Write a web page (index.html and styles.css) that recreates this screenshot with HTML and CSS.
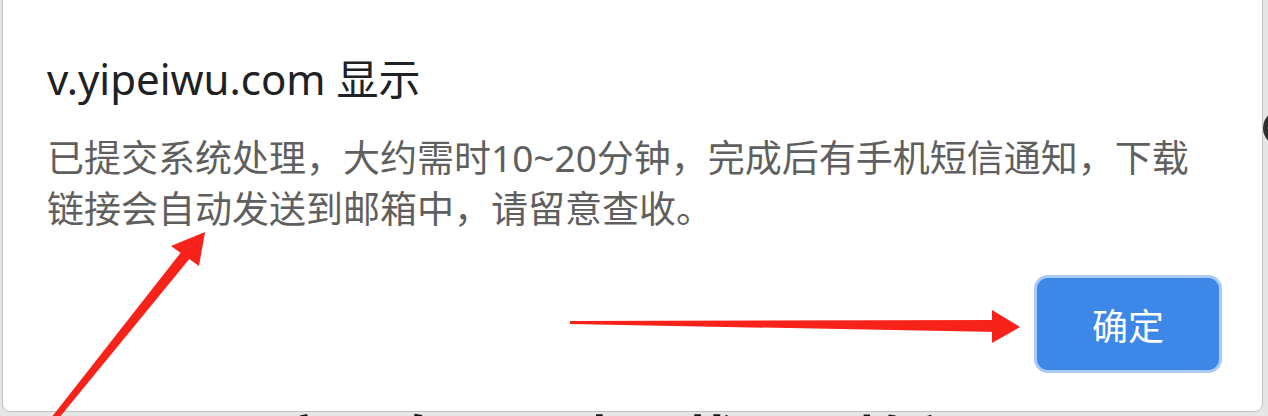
FILE: index.html
```html
<!DOCTYPE html>
<html lang="zh-CN">
<head>
<meta charset="utf-8">
<title>v.yipeiwu.com 显示</title>
<link rel="stylesheet" href="styles.css">
</head>
<body>
  <div class="page">
    <div class="page-bar"><span class="page-circle"></span></div>
    <div class="page-rule"></div>
    <h1 class="page-heading">百度网盘不限速下载工具教程</h1>
  </div>

  <div class="dialog" role="alertdialog">
    <div class="dialog-title">v.yipeiwu.com 显示</div>
    <div class="dialog-message">已提交系统处理，大约需时10~20分钟，完成后有手机短信通知，下载链接会自动发送到邮箱中，请留意查收。</div>
    <div class="dialog-actions">
      <button class="btn-ok" type="button">确定</button>
    </div>
  </div>

  <svg class="annotations" width="1268" height="416" viewBox="0 0 1268 416" aria-hidden="true">
    <polygon class="arrow" points="51,418 59,418 191,257 182,251"/>
    <polygon class="arrow" points="205,232 171,246 199,266"/>
    <polygon class="arrow" points="570,321 570,324 998,332 998,320"/>
    <polygon class="arrow" points="1020,327 992,310 992,343"/>
  </svg>
</body>
</html>
```

FILE: styles.css
```css
* { box-sizing: border-box; }

html, body {
  margin: 0;
  padding: 0;
  width: 1268px;
  height: 416px;
  overflow: hidden;
}

body {
  position: relative;
  background: #e6e6e6;
  font-family: "Noto Sans", "Noto Sans CJK SC", sans-serif;
}

/* page behind the dialog */
.page {
  height: 416px;
  display: flex;
  flex-direction: column;
  overflow: hidden;
}

.page-bar {
  margin-top: 110px;
  height: 36px;
  display: flex;
  justify-content: flex-end;
}

.page-circle {
  width: 36px;
  height: 36px;
  margin-right: -31px;
  border-radius: 50%;
  background: #2e2e2e;
}

.page-rule {
  margin-top: 87px;
  height: 1px;
  background: #bdbdbd;
}

.page-heading {
  margin: 177px 0 0 215px;
  font-family: "Noto Sans CJK SC", sans-serif;
  font-size: 58px;
  font-weight: 700;
  line-height: 1;
  color: #141414;
  white-space: nowrap;
}

/* the alert dialog */
.dialog {
  position: absolute;
  left: 2px;
  right: 5px;
  top: -8px;
  bottom: 4px;
  background: #ffffff;
  border: 1px solid #c3c3c3;
  border-radius: 0 0 8px 8px;
  padding: 62px 43px 0 44px;
  display: flex;
  flex-direction: column;
  z-index: 2;
}

.dialog-title {
  font-size: 42px;
  line-height: 48px;
  color: #202124;
}

.dialog-message {
  margin-top: 29px;
  max-width: 1160px;
  font-size: 37px;
  line-height: 51px;
  color: #5f5f5f;
}

.dialog-actions {
  margin-top: 44px;
  display: flex;
  justify-content: flex-end;
}

.btn-ok {
  width: 182px;
  height: 92px;
  border: none;
  border-radius: 11px;
  background: #3d87e8;
  box-shadow: 0 0 0 3px #a9c9f6;
  color: #ffffff;
  font-family: "Noto Sans CJK SC", sans-serif;
  font-size: 36px;
  padding: 0;
}

/* red annotation arrows */
.annotations {
  position: absolute;
  left: 0;
  top: 0;
  z-index: 3;
  pointer-events: none;
}

.arrow {
  fill: #f7231b;
}
```
